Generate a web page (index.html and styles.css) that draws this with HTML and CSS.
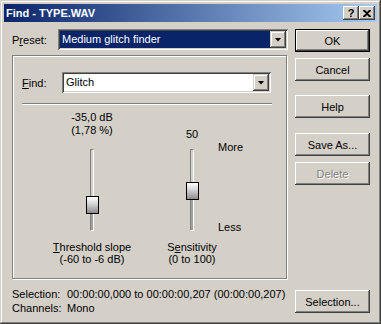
FILE: index.html
```html
<!DOCTYPE html>
<html lang="en">
<head>
  <meta charset="UTF-8" />
  <title>Find - TYPE.WAV</title>
  <link rel="stylesheet" href="styles.css">
</head>
<body>

  <div class="window">
    <div class="titlebar">
      <span class="title">Find - TYPE.WAV</span>
      <span class="caption-btn">?</span>
      <span class="caption-btn">
        <svg width="8" height="7" viewBox="0 0 8 7"><path d="M0 0h2l2 2 2-2h2v1L5 3.5 8 6v1H6L4 5 2 7H0V6l3-2.5L0 1z" fill="#000"/></svg>
      </span>
    </div>

    <div class="client">
      <div class="left">
        <div class="preset-row">
          <span class="lbl">P<u>r</u>eset:</span>
          <div class="combo preset">
            <span class="combo-text focus">Medium glitch finder</span>
            <span class="drop"><i class="arrow"></i></span>
          </div>
        </div>

        <div class="group">
          <div class="find-row">
            <span class="lbl find-lbl"><u>F</u>ind:</span>
            <div class="combo find">
              <span class="combo-text">Glitch</span>
              <span class="drop"><i class="arrow"></i></span>
            </div>
          </div>

          <div class="sep"></div>

          <div class="sliders">
            <div class="value v1">-35,0 dB<br>(1,78 %)</div>
            <div class="value v2">50</div>

            <div class="slot s1">
              <div class="track" style="--pos: 46px"><div class="thumb"></div></div>
            </div>
            <div class="slot s2">
              <div class="track" style="--pos: 32px"><div class="thumb"></div></div>
            </div>
            <span class="tick more">More</span>
            <span class="tick less">Less</span>

            <div class="caption c1"><u>T</u>hreshold slope<br>(-60 to -6 dB)</div>
            <div class="caption c2">S<u>e</u>nsitivity<br>(0 to 100)</div>
          </div>
        </div>
      </div>

      <div class="buttons">
        <button class="btn default">OK</button>
        <button class="btn cancel">Cancel</button>
        <button class="btn help">Help</button>
        <button class="btn save">Save As...</button>
        <button class="btn delete" disabled>Delete</button>
      </div>

      <div class="info">
        <span>Selection:</span><span>00:00:00,000 to 00:00:00,207 (00:00:00,207)</span>
        <span>Channels:</span><span>Mono</span>
      </div>
      <button class="btn selection">Selection...</button>
    </div>
  </div>

</body>
</html>
```

FILE: styles.css
```css
* {
  box-sizing: border-box;
}

body {
  margin: 0;
  background: #d4d0c8;
  font-family: 'Liberation Sans', Arial, sans-serif;
  font-size: 11px;
  color: #000;
}

.window {
  width: 381px;
  height: 324px;
  padding: 4px;
  background: #d4d0c8;
  box-shadow: inset -1px -1px #404040, inset 1px 1px #d4d0c8,
              inset -2px -2px #808080, inset 2px 2px #fff;
}

/* title bar */
.titlebar {
  height: 18px;
  display: flex;
  align-items: center;
  padding: 0 2px 0 2px;
  background: linear-gradient(90deg, #0a246a, #a6caf0);
}

.title {
  flex: 1;
  color: #fff;
  font-weight: bold;
  line-height: 18px;
}

.caption-btn {
  width: 16px;
  height: 14px;
  display: flex;
  align-items: center;
  justify-content: center;
  background: #d4d0c8;
  font-weight: bold;
  font-size: 11px;
  line-height: 14px;
  box-shadow: inset -1px -1px #404040, inset 1px 1px #fff,
              inset -2px -2px #808080, inset 2px 2px #d4d0c8;
}

/* client area */
.client {
  display: grid;
  grid-template-columns: 276px 75px;
  column-gap: 7px;
  row-gap: 8px;
  padding: 7px 7px 0 8px;
}

.preset-row,
.find-row {
  display: flex;
  align-items: center;
}

.lbl {
  width: 46px;
}

.find-lbl {
  width: 40px;
}

/* combo boxes */
.combo {
  height: 21px;
  display: flex;
  padding: 2px;
  background: #fff;
  box-shadow: inset 1px 1px #808080, inset -1px -1px #fff,
              inset 2px 2px #404040, inset -2px -2px #d4d0c8;
}

.combo.preset {
  width: 230px;
}

.combo.find {
  width: 209px;
}

.combo-text {
  flex: 1;
  padding-left: 2px;
  line-height: 17px;
}

.combo-text.focus {
  background: #0a246a;
  color: #fff;
}

.drop {
  width: 16px;
  height: 17px;
  display: flex;
  align-items: center;
  justify-content: center;
  background: #d4d0c8;
  box-shadow: inset -1px -1px #404040, inset 1px 1px #d4d0c8,
              inset -2px -2px #808080, inset 2px 2px #fff;
}

.arrow {
  width: 7px;
  height: 4px;
  background: #000;
  clip-path: polygon(0 0, 100% 0, 50% 100%);
}

/* group frame */
.group {
  height: 224px;
  width: 275px;
  margin-top: 5px;
  padding: 16px 0 0 9px;
  border: 1px solid #808080;
  box-shadow: inset 1px 1px #fff, 1px 1px #fff;
}

.sep {
  width: 250px;
  height: 2px;
  margin-top: 10px;
  border-top: 1px solid #808080;
  border-bottom: 1px solid #fff;
}

/* sliders */
.sliders {
  display: grid;
  grid-template-columns: 100px 100px;
  grid-template-rows: 28px 96px auto;
  margin: 6px 0 0 20px;
}

.value {
  text-align: center;
  line-height: 13px;
}

.v1 {
  grid-area: 1 / 1;
}

.v2 {
  grid-area: 1 / 2;
  align-self: end;
  margin-bottom: -2px;
}

.slot {
  display: flex;
  justify-content: center;
}

.s1 {
  grid-area: 2 / 1;
}

.s2 {
  grid-area: 2 / 2;
}

.track {
  position: relative;
  width: 4px;
  height: 82px;
  margin-top: 10px;
  border-left: 1px solid #808080;
  border-top: 1px solid #808080;
  border-right: 1px solid #fff;
  border-bottom: 1px solid #fff;
  background: linear-gradient(#d4d0c8 var(--pos), #a0a0a0 var(--pos));
}

.thumb {
  position: absolute;
  top: var(--pos);
  left: -5px;
  width: 13px;
  height: 18px;
  border: 1px solid #000;
  background: linear-gradient(#fff, #d8d8d8 40%, #8c8c8c);
}

.tick {
  grid-area: 2 / 2;
  justify-self: start;
  margin-left: 76px;
  line-height: 14px;
}

.more {
  align-self: start;
  margin-top: 1px;
}

.less {
  align-self: end;
  margin-bottom: 1px;
}

.caption {
  text-align: center;
  line-height: 12px;
  margin-top: 6px;
}

.c1 {
  grid-area: 3 / 1;
}

.c2 {
  grid-area: 3 / 2;
}

/* buttons */
.buttons {
  display: flex;
  flex-direction: column;
}

.btn {
  width: 75px;
  height: 23px;
  padding: 0;
  border: none;
  background: #d4d0c8;
  font-family: inherit;
  font-size: 11px;
  color: #000;
  box-shadow: inset -1px -1px #404040, inset 1px 1px #fff,
              inset -2px -2px #808080, inset 2px 2px #d4d0c8;
}

.btn.default {
  box-shadow: inset 0 0 0 1px #000, inset -2px -2px #404040, inset 2px 2px #fff,
              inset -3px -3px #808080;
}

.cancel,
.delete {
  margin-top: 6px;
}

.help {
  margin-top: 14px;
}

.save {
  margin-top: 15px;
}

.btn:disabled {
  color: #808080;
  text-shadow: 1px 1px #fff;
}

.info {
  display: grid;
  grid-template-columns: 55px auto;
  line-height: 14px;
  padding-left: 0;
}

.selection {
  margin-top: 3px;
}
```
